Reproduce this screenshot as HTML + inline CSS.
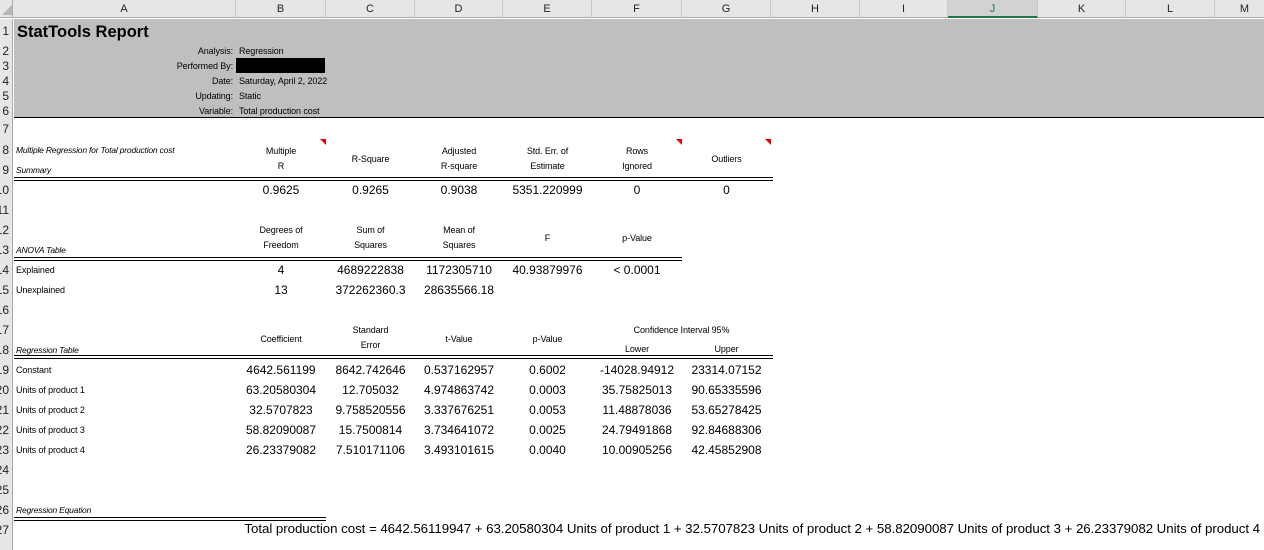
<!DOCTYPE html>
<html><head><meta charset="utf-8"><style>
*{margin:0;padding:0;box-sizing:border-box}
body{width:1264px;height:542px;overflow:hidden;background:#fff;font-family:"Liberation Sans",sans-serif;color:#000;position:relative}
.a{position:absolute;white-space:nowrap}
.c{position:absolute;white-space:nowrap;text-align:center}
.hd{position:absolute;top:0;height:18px;background:#e6e6e6;border-right:1px solid #c8c8c8;border-bottom:1px solid #ababab;font-size:11px;line-height:18px;text-align:center;color:#222}
.rn{position:absolute;left:0;width:13px;background:#e6e6e6;border-right:1px solid #ababab;font-size:12px;text-align:right;overflow:hidden;color:#222;direction:rtl;white-space:nowrap;padding-right:3px}
.dl{position:absolute;height:4px;border-top:1px solid #000;border-bottom:1px solid #000}
.lb{font-size:9px;letter-spacing:-0.1px}
.it{font-style:italic;font-size:8.5px;letter-spacing:-0.2px}
.n{font-size:12px}
.tri{position:absolute;width:0;height:0;border-top:6px solid #e00;border-left:6px solid transparent}
</style></head><body>
<div class="a" style="left:0;top:0;width:13px;height:18px;background:#e6e6e6;border-right:1px solid #ababab;border-bottom:1px solid #ababab"></div>
<div class="a" style="left:2px;top:5px;width:0;height:0;border-bottom:10px solid #b5b5b5;border-left:10px solid transparent"></div>
<div class="hd" style="left:13px;width:223px">A</div>
<div class="hd" style="left:236px;width:90px">B</div>
<div class="hd" style="left:326px;width:89px">C</div>
<div class="hd" style="left:415px;width:88px">D</div>
<div class="hd" style="left:503px;width:89px">E</div>
<div class="hd" style="left:592px;width:90px">F</div>
<div class="hd" style="left:682px;width:89px">G</div>
<div class="hd" style="left:771px;width:89px">H</div>
<div class="hd" style="left:860px;width:88px">I</div>
<div class="hd" style="left:948px;width:90px;background:#d2d2d2;color:#217346;border-bottom:2px solid #217346">J</div>
<div class="hd" style="left:1038px;width:88px">K</div>
<div class="hd" style="left:1126px;width:89px">L</div>
<div class="hd" style="left:1215px;width:60px">M</div>
<div class="rn" style="top:19px;height:25px;line-height:25px">1</div>
<div class="rn" style="top:44px;height:15px;line-height:15px">2</div>
<div class="rn" style="top:59px;height:15px;line-height:15px">3</div>
<div class="rn" style="top:74px;height:15px;line-height:15px">4</div>
<div class="rn" style="top:89px;height:15px;line-height:15px">5</div>
<div class="rn" style="top:104px;height:15px;line-height:15px">6</div>
<div class="rn" style="top:119px;height:21px;line-height:21px">7</div>
<div class="rn" style="top:140px;height:20px;line-height:20px">8</div>
<div class="rn" style="top:160px;height:20px;line-height:20px">9</div>
<div class="rn" style="top:180px;height:20px;line-height:20px">10</div>
<div class="rn" style="top:200px;height:20px;line-height:20px">11</div>
<div class="rn" style="top:220px;height:20px;line-height:20px">12</div>
<div class="rn" style="top:240px;height:20px;line-height:20px">13</div>
<div class="rn" style="top:260px;height:20px;line-height:20px">14</div>
<div class="rn" style="top:280px;height:20px;line-height:20px">15</div>
<div class="rn" style="top:300px;height:20px;line-height:20px">16</div>
<div class="rn" style="top:320px;height:20px;line-height:20px">17</div>
<div class="rn" style="top:340px;height:20px;line-height:20px">18</div>
<div class="rn" style="top:360px;height:20px;line-height:20px">19</div>
<div class="rn" style="top:380px;height:20px;line-height:20px">20</div>
<div class="rn" style="top:400px;height:20px;line-height:20px">21</div>
<div class="rn" style="top:420px;height:20px;line-height:20px">22</div>
<div class="rn" style="top:440px;height:20px;line-height:20px">23</div>
<div class="rn" style="top:460px;height:20px;line-height:20px">24</div>
<div class="rn" style="top:480px;height:20px;line-height:20px">25</div>
<div class="rn" style="top:500px;height:20px;line-height:20px">26</div>
<div class="rn" style="top:520px;height:20px;line-height:20px">27</div>
<div class="rn" style="top:540px;height:10px"></div>

<div class="a" style="left:14px;top:19px;width:1250px;height:99px;background:#bfbfbf;border-bottom:1px solid #000"></div>
<div class="a" style="left:17px;top:22px;font-size:16.5px;font-weight:bold;line-height:20px">StatTools Report</div>
<div class="a lb" style="right:1031px;top:45px;line-height:12px">Analysis:</div>
<div class="a lb" style="left:239px;top:45px;line-height:12px">Regression</div>
<div class="a lb" style="right:1031px;top:60px;line-height:12px">Performed By:</div>
<div class="a" style="left:236px;top:58px;width:89px;height:15px;background:#000"></div>
<div class="a lb" style="right:1031px;top:75px;line-height:12px">Date:</div>
<div class="a lb" style="left:239px;top:75px;line-height:12px">Saturday, April 2, 2022</div>
<div class="a lb" style="right:1031px;top:90px;line-height:12px">Updating:</div>
<div class="a lb" style="left:239px;top:90px;line-height:12px">Static</div>
<div class="a lb" style="right:1031px;top:105px;line-height:12px">Variable:</div>
<div class="a lb" style="left:239px;top:105px;line-height:12px">Total production cost</div>

<div class="a it" style="left:16px;top:144px;line-height:12px">Multiple Regression for Total production cost</div>
<div class="a it" style="left:16px;top:164px;line-height:12px">Summary</div>
<div class="c lb" style="left:236px;width:90px;top:144px;line-height:15px">Multiple<br>R</div>
<div class="c lb" style="left:326px;width:89px;top:152px;line-height:15px">R-Square</div>
<div class="c lb" style="left:415px;width:88px;top:144px;line-height:15px">Adjusted<br>R-square</div>
<div class="c lb" style="left:503px;width:89px;top:144px;line-height:15px">Std. Err. of<br>Estimate</div>
<div class="c lb" style="left:592px;width:90px;top:144px;line-height:15px">Rows<br>Ignored</div>
<div class="c lb" style="left:682px;width:89px;top:152px;line-height:15px">Outliers</div>
<div class="tri" style="left:320px;top:139px"></div>
<div class="tri" style="left:676px;top:139px"></div>
<div class="tri" style="left:765px;top:139px"></div>
<div class="dl" style="left:14px;top:177px;width:759px"></div>
<div class="c n" style="left:236px;width:90px;top:183px;line-height:14px">0.9625</div>
<div class="c n" style="left:326px;width:89px;top:183px;line-height:14px">0.9265</div>
<div class="c n" style="left:415px;width:88px;top:183px;line-height:14px">0.9038</div>
<div class="c n" style="left:503px;width:89px;top:183px;line-height:14px">5351.220999</div>
<div class="c n" style="left:592px;width:90px;top:183px;line-height:14px">0</div>
<div class="c n" style="left:682px;width:89px;top:183px;line-height:14px">0</div>

<div class="a it" style="left:16px;top:244px;line-height:12px">ANOVA Table</div>
<div class="c lb" style="left:236px;width:90px;top:223px;line-height:15px">Degrees of<br>Freedom</div>
<div class="c lb" style="left:326px;width:89px;top:223px;line-height:15px">Sum of<br>Squares</div>
<div class="c lb" style="left:415px;width:88px;top:223px;line-height:15px">Mean of<br>Squares</div>
<div class="c lb" style="left:503px;width:89px;top:231px;line-height:15px">F</div>
<div class="c lb" style="left:592px;width:90px;top:231px;line-height:15px">p-Value</div>
<div class="dl" style="left:14px;top:257px;width:668px"></div>
<div class="a lb" style="left:16px;top:264px;line-height:12px">Explained</div>
<div class="a lb" style="left:16px;top:284px;line-height:12px">Unexplained</div>
<div class="c n" style="left:236px;width:90px;top:263px;line-height:14px">4</div>
<div class="c n" style="left:326px;width:89px;top:263px;line-height:14px">4689222838</div>
<div class="c n" style="left:415px;width:88px;top:263px;line-height:14px">1172305710</div>
<div class="c n" style="left:503px;width:89px;top:263px;line-height:14px">40.93879976</div>
<div class="c n" style="left:592px;width:90px;top:263px;line-height:14px">&lt; 0.0001</div>
<div class="c n" style="left:236px;width:90px;top:283px;line-height:14px">13</div>
<div class="c n" style="left:326px;width:89px;top:283px;line-height:14px">372262360.3</div>
<div class="c n" style="left:415px;width:88px;top:283px;line-height:14px">28635566.18</div>

<div class="a it" style="left:16px;top:344px;line-height:12px">Regression Table</div>
<div class="c lb" style="left:236px;width:90px;top:332px;line-height:15px">Coefficient</div>
<div class="c lb" style="left:326px;width:89px;top:323px;line-height:15px">Standard<br>Error</div>
<div class="c lb" style="left:415px;width:88px;top:332px;line-height:15px">t-Value</div>
<div class="c lb" style="left:503px;width:89px;top:332px;line-height:15px">p-Value</div>
<div class="c lb" style="left:592px;width:179px;top:323px;line-height:15px">Confidence Interval 95%</div>
<div class="c lb" style="left:592px;width:90px;top:342px;line-height:15px">Lower</div>
<div class="c lb" style="left:682px;width:89px;top:342px;line-height:15px">Upper</div>
<div class="dl" style="left:14px;top:355px;width:759px"></div>

<div class="a lb" style="left:16px;top:364px;line-height:12px">Constant</div>
<div class="a lb" style="left:16px;top:384px;line-height:12px">Units of product 1</div>
<div class="a lb" style="left:16px;top:404px;line-height:12px">Units of product 2</div>
<div class="a lb" style="left:16px;top:424px;line-height:12px">Units of product 3</div>
<div class="a lb" style="left:16px;top:444px;line-height:12px">Units of product 4</div>

<div class="c n" style="left:236px;width:90px;top:363px;line-height:14px">4642.561199</div>
<div class="c n" style="left:326px;width:89px;top:363px;line-height:14px">8642.742646</div>
<div class="c n" style="left:415px;width:88px;top:363px;line-height:14px">0.537162957</div>
<div class="c n" style="left:503px;width:89px;top:363px;line-height:14px">0.6002</div>
<div class="c n" style="left:592px;width:90px;top:363px;line-height:14px">-14028.94912</div>
<div class="c n" style="left:682px;width:89px;top:363px;line-height:14px">23314.07152</div>

<div class="c n" style="left:236px;width:90px;top:383px;line-height:14px">63.20580304</div>
<div class="c n" style="left:326px;width:89px;top:383px;line-height:14px">12.705032</div>
<div class="c n" style="left:415px;width:88px;top:383px;line-height:14px">4.974863742</div>
<div class="c n" style="left:503px;width:89px;top:383px;line-height:14px">0.0003</div>
<div class="c n" style="left:592px;width:90px;top:383px;line-height:14px">35.75825013</div>
<div class="c n" style="left:682px;width:89px;top:383px;line-height:14px">90.65335596</div>

<div class="c n" style="left:236px;width:90px;top:403px;line-height:14px">32.5707823</div>
<div class="c n" style="left:326px;width:89px;top:403px;line-height:14px">9.758520556</div>
<div class="c n" style="left:415px;width:88px;top:403px;line-height:14px">3.337676251</div>
<div class="c n" style="left:503px;width:89px;top:403px;line-height:14px">0.0053</div>
<div class="c n" style="left:592px;width:90px;top:403px;line-height:14px">11.48878036</div>
<div class="c n" style="left:682px;width:89px;top:403px;line-height:14px">53.65278425</div>

<div class="c n" style="left:236px;width:90px;top:423px;line-height:14px">58.82090087</div>
<div class="c n" style="left:326px;width:89px;top:423px;line-height:14px">15.7500814</div>
<div class="c n" style="left:415px;width:88px;top:423px;line-height:14px">3.734641072</div>
<div class="c n" style="left:503px;width:89px;top:423px;line-height:14px">0.0025</div>
<div class="c n" style="left:592px;width:90px;top:423px;line-height:14px">24.79491868</div>
<div class="c n" style="left:682px;width:89px;top:423px;line-height:14px">92.84688306</div>

<div class="c n" style="left:236px;width:90px;top:443px;line-height:14px">26.23379082</div>
<div class="c n" style="left:326px;width:89px;top:443px;line-height:14px">7.510171106</div>
<div class="c n" style="left:415px;width:88px;top:443px;line-height:14px">3.493101615</div>
<div class="c n" style="left:503px;width:89px;top:443px;line-height:14px">0.0040</div>
<div class="c n" style="left:592px;width:90px;top:443px;line-height:14px">10.00905256</div>
<div class="c n" style="left:682px;width:89px;top:443px;line-height:14px">42.45852908</div>

<div class="a it" style="left:16px;top:504px;line-height:12px">Regression Equation</div>
<div class="dl" style="left:14px;top:517px;width:312px"></div>
<div class="a" style="right:4px;top:521px;font-size:13.3px;line-height:16px;letter-spacing:-0.05px">Total production cost = 4642.56119947 + 63.20580304 Units of product 1 + 32.5707823 Units of product 2 + 58.82090087 Units of product 3 + 26.23379082 Units of product 4</div>
</body></html>
